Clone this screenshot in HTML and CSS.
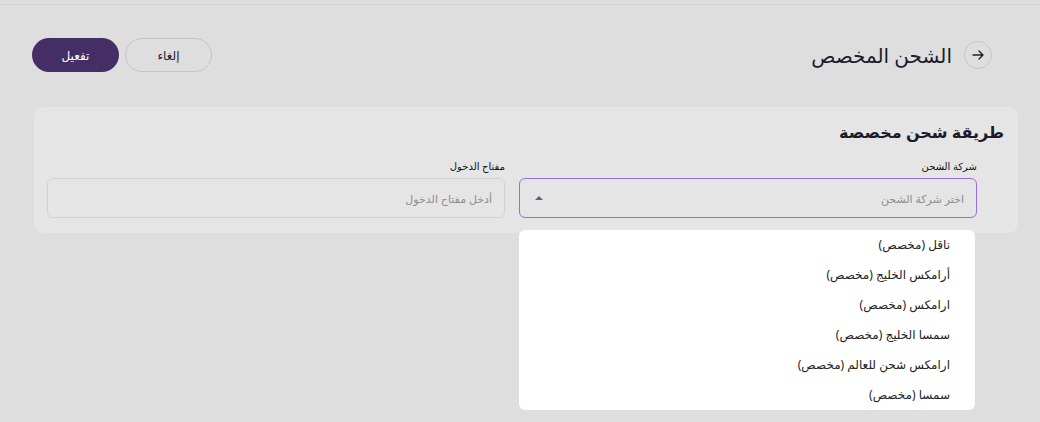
FILE: index.html
```html
<!DOCTYPE html>
<html lang="ar" dir="rtl">
<head>
<meta charset="utf-8">
<title>الشحن المخصص</title>
<link rel="stylesheet" href="styles.css">
</head>
<body>
<div class="topline"></div>
<main class="page">
  <header class="head">
    <div class="head-title">
      <button class="back" aria-label="رجوع">
        <svg width="14" height="14" viewBox="0 0 14 14"><path d="M2 7h10M8 3l4 4-4 4" fill="none" stroke="#222" stroke-width="1.4" stroke-linecap="round" stroke-linejoin="round"/></svg>
      </button>
      <h1>الشحن المخصص</h1>
    </div>
    <div class="actions">
      <button class="btn btn-cancel">إلغاء</button>
      <button class="btn btn-primary">تفعيل</button>
    </div>
  </header>
  <section class="card">
    <h2>طريقة شحن مخصصة</h2>
    <div class="fields">
      <div class="field">
        <label>شركة الشحن</label>
        <div class="select">
          <span class="placeholder">اختر شركة الشحن</span>
          <span class="caret"></span>
          <ul class="menu">
            <li>ناقل (مخصص)</li>
            <li>أرامكس الخليج (مخصص)</li>
            <li>ارامكس (مخصص)</li>
            <li>سمسا الخليج (مخصص)</li>
            <li>ارامكس شحن للعالم (مخصص)</li>
            <li>سمسا (مخصص)</li>
          </ul>
        </div>
      </div>
      <div class="field">
        <label>مفتاح الدخول</label>
        <div class="input"><span class="placeholder">أدخل مفتاح الدخول</span></div>
      </div>
    </div>
  </section>
</main>
</body>
</html>
```
FILE: styles.css
```css
* { box-sizing: border-box; }
html, body { margin: 0; padding: 0; }
body {
  background: #dedede;
  font-family: "Noto Sans", "DejaVu Sans", sans-serif;
  color: #1a1a1a;
  width: 1040px;
  height: 422px;
  overflow: hidden;
}
.topline { height: 5px; border-bottom: 1px solid #d2d2d2; }
.page { padding: 33px 48px 0 32px; }
.head { display: flex; justify-content: space-between; align-items: center; height: 34px; }
.head-title { display: flex; align-items: center; gap: 12px; }
.back {
  width: 28px; height: 28px; border-radius: 50%;
  border: 1px solid #c6c6cc; background: transparent;
  display: flex; align-items: center; justify-content: center; padding: 0;
}
h1 { margin: 0; font-size: 20px; font-weight: 500; color: #1b1b2b; }
.actions { display: flex; gap: 6px; }
.btn {
  width: 87px; height: 34px; border-radius: 17px;
  font-family: inherit; font-size: 12px; font-weight: 400;
}
.btn-cancel { background: transparent; border: 1px solid #c4c4c8; color: #1b1b2b; }
.btn-primary { background: #452e66; border: none; color: #fff; }
.card {
  margin: 34px -27px 0 1px;
  background: #e5e5e5;
  border-radius: 10px;
  padding: 14px 14px 15px 13px;
  border: 1px solid #dddddd;
}
h2 { margin: 0 0 16px; font-size: 16px; font-weight: 600; color: #1b1b2b; }
.fields { display: grid; grid-template-columns: 1fr 1fr; gap: 14px; margin-right: 27px; }
.field label { display: block; font-size: 10px; font-weight: 500; margin-bottom: 5px; color: #111; }
.select, .input {
  position: relative;
  height: 40px; border-radius: 6px;
  display: flex; align-items: center; justify-content: space-between;
  padding: 0 12px 0 15px;
}
.select { border: 1px solid #9d6be0; }
.input { border: 1px solid #d2d2d2; }
.placeholder { font-size: 11px; color: #8e8e8e; }
.caret {
  width: 0; height: 0;
  border-left: 4px solid transparent; border-right: 4px solid transparent;
  border-bottom: 4px solid #6b5a7a;
}
.menu {
  position: absolute; top: 51px; right: 1px; left: -1px;
  margin: 0; padding: 0 25px 0 0; list-style: none;
  background: #fff; border-radius: 6px;
  height: 180px;
}
.menu li { height: 30px; line-height: 30px; font-size: 12px; color: #222; }
```
